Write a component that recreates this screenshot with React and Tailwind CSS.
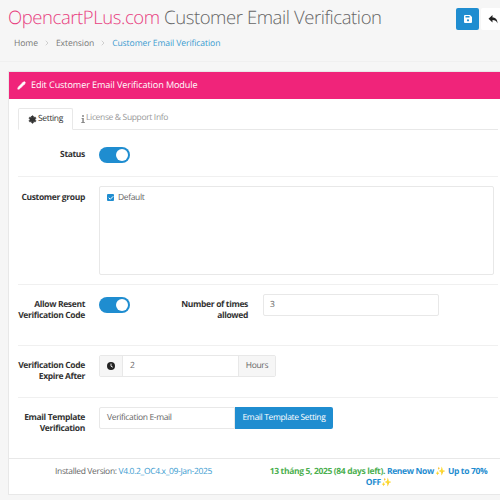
import { Pencil, Settings, ChevronRight, Check } from 'lucide-react'

function Toggle() {
  return (
    <div className="w-[31px] h-[16px] rounded-full bg-[#1f8dd0] flex items-center justify-end pr-[2px]">
      <div className="w-[12px] h-[12px] rounded-full bg-white" />
    </div>
  )
}

function Label({ children, className = '' }) {
  return <div className={`${className} shrink-0 text-right font-bold text-[8.5px] tracking-[-0.35px] leading-[11px] text-[#333]`}>{children}</div>
}

function Row({ h, children, last }) {
  return (
    <div className={`flex items-start ${h} ${last ? '' : 'border-b border-[#f0f0f0]'}`}>{children}</div>
  )
}

export default function App() {
  return (
    <div className="w-[500px] h-[500px] overflow-hidden bg-[#f6f6f6] font-['Open_Sans',sans-serif] text-[#666] [text-rendering:geometricPrecision]">
      {/* Page header */}
      <div className="h-[62px] border-b border-[#f0f0f0] pl-2 pt-[6px] relative">
        <h1 className="text-[18.5px] tracking-[-0.42px] leading-[24px] font-light whitespace-nowrap text-[#666]">
          <span className="text-[#e8407f]">OpencartPLus.com</span> Customer Email Verification
        </h1>
        <div className="flex items-center mt-[7px] pl-[6px] text-[8.6px] tracking-[-0.1px] leading-[12px] text-[#777]">
          <span>Home</span>
          <ChevronRight size={8} className="mx-[5px] text-[#bbb]" />
          <span>Extension</span>
          <ChevronRight size={8} className="mx-[5px] text-[#bbb]" />
          <span className="text-[#3a9bd0]">Customer Email Verification</span>
        </div>
        <div className="absolute top-[8px] left-[456px] flex gap-[2px]">
          <div className="w-[23px] h-[22px] rounded-[2px] bg-[#1f8dd0] flex items-center justify-center">
            <svg width="8" height="8" viewBox="0 0 8 8">
              <path d="M1 0h5l2 2v5a1 1 0 0 1-1 1H1a1 1 0 0 1-1-1V1a1 1 0 0 1 1-1z" fill="white" />
              <rect x="1.5" y="1" width="4" height="1.5" fill="#1f8dd0" />
              <circle cx="4" cy="5.3" r="1.1" fill="#1f8dd0" />
            </svg>
          </div>
          <div className="w-[23px] h-[22px] rounded-[2px] bg-white flex items-center justify-center">
            <svg width="10" height="9" viewBox="0 0 20 18">
              <path d="M9 5V0L1 7.5 9 15v-5c5 0 8 1.5 10 7 0-7-3-12-10-12z" fill="#222" />
            </svg>
          </div>
        </div>
      </div>

      {/* Panel */}
      <div className="mt-[9px] ml-2 w-[500px] h-[424px] bg-white border border-[#e8e8e8]">
        <div className="h-[27px] bg-[#f0247a] flex items-center pl-[8px] pb-[1px] text-white text-[9.1px] tracking-[-0.1px]">
          <Pencil size={9} fill="white" className="mr-[5px]" />
          Edit Customer Email Verification Module
        </div>

        <div className="px-[9px] pt-[9px]">
          {/* Tabs */}
          <div className="flex h-[22px] border-b border-[#e8e8e8] text-[8.5px] tracking-[-0.35px]">
            <div className="w-[55px] h-[22px] bg-white border border-[#e8e8e8] border-b-white rounded-t-[2px] flex items-center justify-center text-[#333]">
              <Settings size={9} className="mr-[1px]" fill="#333" />
              Setting
            </div>
            <div className="flex items-center ml-[8px] text-[#999]">
              <svg width="4" height="8" viewBox="0 0 4 8" className="mr-[1px]">
                <circle cx="2" cy="1" r="1" fill="#888" />
                <path d="M0.6 3h2.2v4h1v1H0.3V7h1V4H0.6z" fill="#888" />
              </svg>
              License &amp; Support Info
            </div>
          </div>

          <Row h="h-[47px]">
            <Label className="w-[75px] -ml-[8px] mt-[19px]">Status</Label>
            <div className="ml-[14px] mt-[17px]"><Toggle /></div>
          </Row>

          <Row h="h-[108px]">
            <Label className="w-[75px] -ml-[8px] mt-[15px]">Customer group</Label>
            <div className="ml-[14px] mt-[9px] w-[395px] h-[89px] border border-[#e8e8e8] rounded-[2px] pl-[7px] pt-[5px] flex items-start text-[8.5px] tracking-[-0.35px] leading-[11px] text-[#666]">
              <div className="w-[7px] h-[7px] mt-[2px] mr-[4px] rounded-[1px] bg-[#1f8dd0] flex items-center justify-center">
                <Check size={6} className="text-white" strokeWidth={4} />
              </div>
              Default
            </div>
          </Row>

          <Row h="h-[61px]">
            <Label className="w-[75px] -ml-[8px] mt-[14px]">Allow Resent Verification Code</Label>
            <div className="ml-[14px] mt-[12px]"><Toggle /></div>
            <Label className="w-[70px] ml-[48px] mt-[14px]">Number of times allowed</Label>
            <div className="ml-[15px] mt-[9px] w-[176px] h-[22px] border border-[#e8e8e8] rounded-[2px] pl-[6px] flex items-center text-[8.5px]">3</div>
          </Row>

          <Row h="h-[52px]">
            <Label className="w-[75px] -ml-[8px] mt-[14px]">Verification Code Expire After</Label>
            <div className="ml-[14px] mt-[9px] w-[177px] h-[22px] flex border border-[#e8e8e8] rounded-[2px] text-[8.5px] tracking-[-0.35px]">
              <div className="w-[23px] bg-[#f6f6f6] flex items-center justify-center border-r border-[#e8e8e8]">
                <svg width="8" height="8" viewBox="0 0 8 8">
                  <circle cx="4" cy="4" r="4" fill="#222" />
                  <path d="M4 1.6v2.6l1.8 1" stroke="white" strokeWidth="0.9" fill="none" />
                </svg>
              </div>
              <div className="flex-1 pl-[7px] flex items-center">2</div>
              <div className="w-[37px] bg-[#f6f6f6] border-l border-[#e8e8e8] flex items-center justify-center">Hours</div>
            </div>
          </Row>

          <Row h="h-[60px]" last>
            <Label className="w-[75px] -ml-[8px] mt-[14px]">Email Template Verification</Label>
            <div className="ml-[14px] mt-[9px] flex h-[22px] text-[8.5px] tracking-[-0.35px]">
              <div className="w-[136px] border border-[#e8e8e8] rounded-l-[2px] pl-[7px] flex items-center">Verification E-mail</div>
              <div className="w-[98px] bg-[#1f8dd0] rounded-r-[2px] text-white flex items-center justify-center">Email Template Setting</div>
            </div>
          </Row>
        </div>

        {/* Footer */}
        <div className="h-[36px] border-t border-[#e8e8e8] flex text-[8.5px] tracking-[-0.35px] leading-[11px] pt-[7px]">
          <div className="w-[258px] pl-[46px] whitespace-nowrap">
            Installed Version: <span className="text-[#3a9bd0]">V4.0.2_OC4.x_09-Jan-2025</span>
          </div>
          <div className="w-[223px] text-center font-bold text-[#4caf50]">
            13 tháng 5, 2025 (84 days left). <span className="text-[#1f8dd0]">Renew Now ✨ Up to 70% OFF✨</span>
          </div>
        </div>
      </div>
    </div>
  )
}
